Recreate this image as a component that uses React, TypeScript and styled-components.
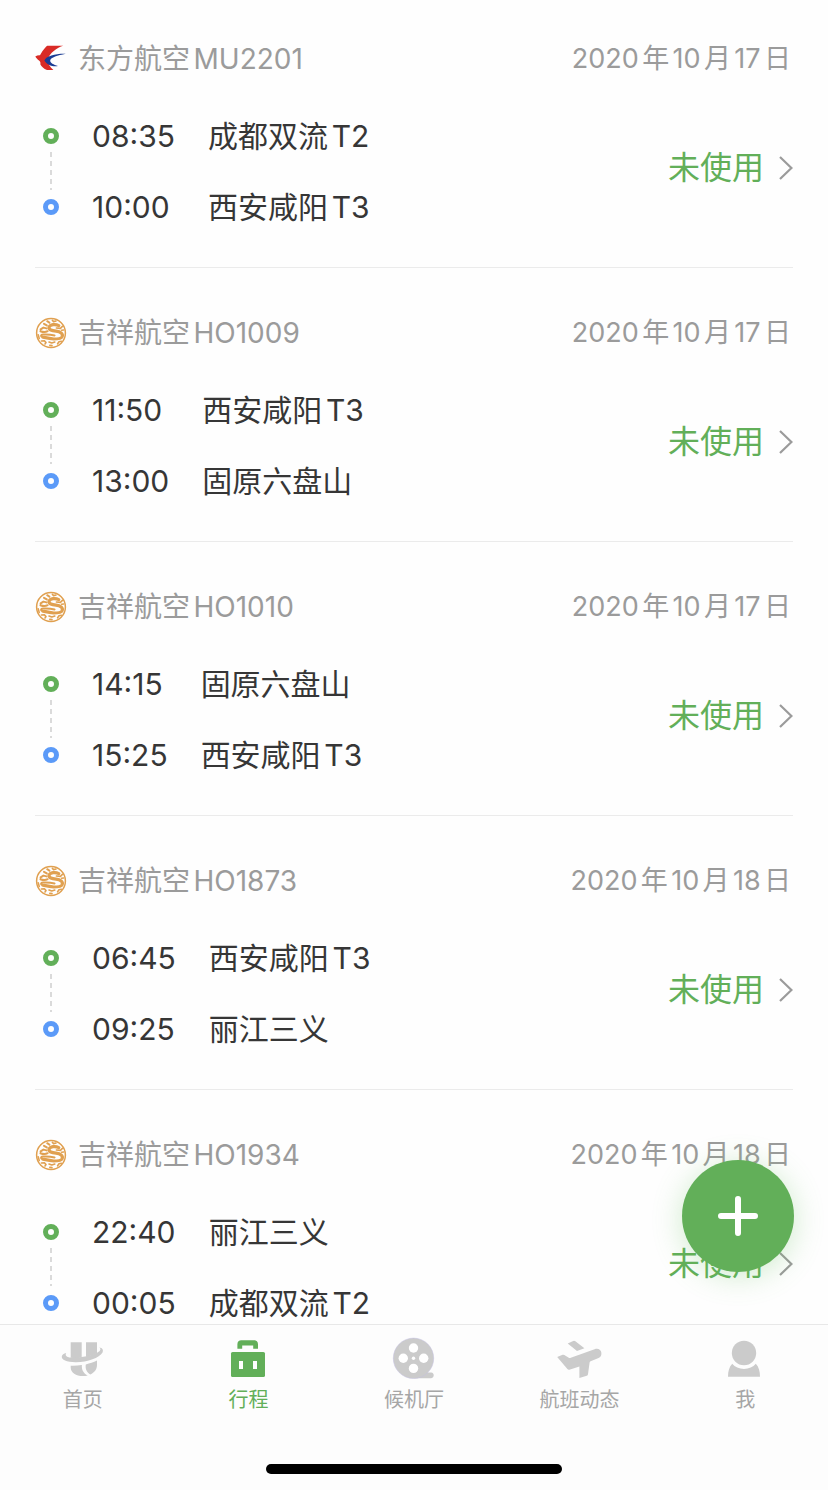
import React from 'react';
import styled, { createGlobalStyle } from 'styled-components';

const GlobalStyle = createGlobalStyle`
  * { box-sizing: border-box; }
  body {
    margin: 0;
    background: #fefefe;
    font-family: Inter, "Noto Sans CJK SC", sans-serif;
    color: #363636;
    text-autospace: normal;
  }
  button { font-family: inherit; }
`;

const GREEN = '#62af59';
const BLUE = '#5b9af8';

const Screen = styled.div`
  position: relative;
  display: flex;
  flex-direction: column;
  height: 100vh;
`;

const TripList = styled.main`
  flex: 1;
  min-height: 0;
  display: flex;
  flex-direction: column;
  gap: 6px;
  padding: 0 35px;
  overflow-y: auto;
  scrollbar-width: none;
`;

const Trip = styled.article`
  flex: none;
  padding: 39px 0 24px;
  border-bottom: 1px solid #ebebeb;
`;

const TripHeader = styled.header`
  display: flex;
  align-items: center;
  height: 40px;
  margin-bottom: 22px;
  padding-right: 2px;
  line-height: 40px;
  color: #9b9b9b;
`;

const FlightName = styled.h2`
  margin: 0 auto 0 11px;
  font-size: 28px;
  font-weight: 400;
`;

const FlightDate = styled.time`
  font-size: 27px;
`;

const TripBody = styled.div`
  display: flex;
  align-items: center;
`;

const Track = styled.div`
  display: flex;
  flex-direction: column;
  align-items: center;
  justify-content: space-between;
  width: 32px;
  height: 87px;
  margin: 0 25px 2px 0;
`;

const Stop = styled.span<{ $color: string }>`
  width: 16px;
  height: 16px;
  border: 5px solid ${(p) => p.$color};
  border-radius: 50%;
`;

const Dashes = styled.span`
  width: 2px;
  height: 38px;
  background: repeating-linear-gradient(#dadada 0 5px, transparent 5px 9px);
`;

const Legs = styled.div`
  display: grid;
  grid-template-columns: auto auto;
  column-gap: 33px;
  font-size: 30px;
  line-height: 71px;
`;

const Status = styled.a`
  display: flex;
  align-items: center;
  gap: 14px;
  margin: 0 0 8px auto;
  font-size: 32px;
  line-height: 40px;
  color: ${GREEN};
  text-decoration: none;
`;

const AddButton = styled.button`
  position: absolute;
  right: 34px;
  bottom: 218px;
  display: flex;
  align-items: center;
  justify-content: center;
  width: 112px;
  height: 112px;
  padding: 0;
  border: 0;
  border-radius: 50%;
  background: ${GREEN};
  box-shadow: 0 4px 30px rgba(98, 190, 90, 0.3);
`;

const TabBar = styled.nav`
  flex: none;
  display: flex;
  flex-direction: column;
  align-items: center;
  padding-bottom: 16px;
  border-top: 1px solid #e8e8e8;
  background: #fdfdfd;
`;

const Tabs = styled.div`
  display: flex;
  align-self: stretch;
  margin-bottom: 52px;
`;

const Tab = styled.button<{ $active?: boolean }>`
  flex: 1;
  display: flex;
  flex-direction: column;
  align-items: center;
  gap: 8px;
  padding: 13px 0 0;
  border: 0;
  background: none;
  font-size: 20px;
  line-height: 24px;
  color: ${(p) => (p.$active ? GREEN : '#a6a6a6')};

  svg { color: ${(p) => (p.$active ? GREEN : '#cbcbcb')}; overflow: visible; }
`;

const HomeIndicator = styled.div`
  width: 296px;
  height: 10px;
  border-radius: 5px;
  background: #000;
`;

const EasternLogo = () => (
  <svg width="32" height="32" viewBox="0 0 32 32" aria-hidden="true">
    <path fill="#d92b26" d="M12.3 2.7H28.3C22 4.5 14.5 10 12.6 16.5C12.8 20 15 24.5 18.4 27H12C8.8 25.5 6.4 23.5 5.4 21.4C5.6 19.5 5.2 18.6 4 17.6C2.6 16.2 1.4 15.2.3 13.4C1.8 12.4 3.5 12 5 12.2C6.5 9.5 9.5 4.6 12.3 2.7Z" />
    <path fill="#1b3c94" d="M30.8 10.8C21.5 10.4 11 13 9.4 17.4C11.8 22 17.5 23.8 23 23C18.5 21.8 15.2 20.2 15.2 17.6C15.8 14.2 22.5 12.6 30.8 10.8Z" />
  </svg>
);

const JuneyaoLogo = () => (
  <svg width="32" height="32" viewBox="0 0 32 32" fill="none" stroke="#e0a050" strokeLinecap="round" strokeLinejoin="round" aria-hidden="true">
    <circle cx="16" cy="16" r="14.4" strokeWidth="1.5" />
    <path strokeWidth="3.2" d="M23.8 8.6C20.4 6.8 15.2 7.4 14 10.2C13.6 12.8 16.8 13.8 21 14.2C25.6 14.8 28.2 16.6 27.2 19.6C26 22 22.6 22 18.8 22C14.6 21.6 11 20.8 8 20.2" />
    <path strokeWidth="2" d="M7.4 20C5.4 19.4 5.6 17.6 8 17.6C11.8 17.6 15 17.4 19.6 18.4M12.6 14.2C10.6 15.4 8.4 15.4 5.4 14.2M11.6 11.4L8.4 10.6L5.6 12.4M11.8 8.4L9 6.8M14.4 5.6L12.2 4.2" />
    <path strokeWidth="1.6" d="M17.4 3.4L18.6 4.6L21 4M27.4 9.4L25.4 11.4L21.4 11M28.6 13L26.6 13.2M3.2 17.8L4.2 21.4M6.4 24L9.4 23.8L11 25.6L10 27M14 25L16.8 26L19.8 25M17 28.6L14.8 28.4M22.6 26.8L24 24.8L26.4 24.2" />
  </svg>
);

const Chevron = () => (
  <svg width="15" height="26" viewBox="0 0 15 26" fill="none" stroke="#9b9b9b" strokeWidth="2.2" aria-hidden="true">
    <path d="M2 2L13.4 13L2 24" />
  </svg>
);

const PlusIcon = () => (
  <svg width="42" height="42" viewBox="0 0 42 42" stroke="#fff" strokeWidth="6" strokeLinecap="round" aria-hidden="true">
    <path d="M21 4V38M4 21H38" />
  </svg>
);

const HomeIcon = () => (
  <svg width="44" height="42" viewBox="0 0 44 42" fill="currentColor" aria-hidden="true">
    <path d="M9.7 4.3H20.7V19.6C17 20.2 13 20.3 9.7 19.8ZM25 4.3H36V15.2C32.6 17 29 18.2 25 19Z" />
    <path d="M5.2 15C3.8 17.6 5.6 19.2 9.7 19.6C19.5 20 30.5 17.8 36.5 14.6C39.8 12.8 40.2 11 38.2 9.6C41.4 9.8 42.8 12 41.4 14.8C38.4 20 26 24.4 14.5 24.2C5.5 24 .4 22.2.8 18.6C1 16.8 2.8 15.4 5.2 15Z" />
    <path d="M9.7 27.8C13.6 28 17.2 27.6 20.9 27C20.4 31.8 22.6 35.6 26.8 37.4C18 39.4 9.7 36 9.7 29.4Z" />
    <path d="M24.8 26.4C28.8 25.4 32.6 24.2 36 22.6V27C36 31.2 33.4 34.8 29.4 36.4C26 34.4 24 31 24.8 26.4Z" />
  </svg>
);

const SuitcaseIcon = () => (
  <svg width="44" height="42" viewBox="0 0 44 42" fill="currentColor" aria-hidden="true">
    <path d="M11.4 10.7V6.2C11.4 3.8 13 2.3 15.2 2.3H28.2C30.4 2.3 32 3.8 32 6.2V10.7H27.2V7.6H16.2V10.7Z" />
    <rect x="5" y="14" width="34" height="25" rx="1.6" />
    <path fill="#fff" d="M13 23H17V31H13ZM27 23H31V31H27Z" />
  </svg>
);

const ReelIcon = () => (
  <svg width="44" height="42" viewBox="0 0 44 42" fill="currentColor" aria-hidden="true">
    <path d="M21.5 40.2C27 40.2 31 37.8 33.6 34.6H39.2C42.6 34.6 42.6 40.2 39.2 40.2Z" />
    <circle cx="21.5" cy="20.3" r="20.2" stroke="#c3bfe0" strokeWidth=".5" />
    <g fill="#fff">
      <circle cx="21.5" cy="10" r="4.7" />
      <circle cx="11.3" cy="20.3" r="4.7" />
      <circle cx="31.7" cy="20.3" r="4.7" />
      <circle cx="21.5" cy="30.4" r="4.7" />
      <circle cx="21.5" cy="20.3" r="1.7" />
    </g>
  </svg>
);

const PlaneIcon = () => (
  <svg width="44" height="42" viewBox="0 0 44 42" fill="currentColor" aria-hidden="true">
    <path d="M9.7 5.4L15.2 3Q16.4 2.5 17.4 3.3L26.4 10.3L19 12.9Z" />
    <path d="M-.8 18.9L4.6 16.8Q5.5 16.5 6.3 17L10.8 19.7Q11.7 20.2 12.8 19.8L36.6 11.2C40.4 10 43.2 12 43.4 15C43.6 17.6 42.4 19.2 40.6 20L32.6 23.2Q31.7 23.6 31.6 24.6L30 36.2Q29.8 37.3 28.8 37.7L21.4 40.1V28.4L11.4 31.7Q10.2 32 9.4 31.1Z" />
  </svg>
);

const PersonIcon = () => (
  <svg width="44" height="42" viewBox="0 0 44 42" fill="currentColor" aria-hidden="true">
    <circle cx="21" cy="15" r="12.2" />
    <path d="M9.2 25.8C12 29 16 31 21 31C26 31 30 29 32.8 25.8C35.8 29 37 33.4 37 38.7H5C5 33.4 6.2 29 9.2 25.8Z" />
  </svg>
);

type Flight = {
  airline: string;
  code: string;
  date: string;
  depart: [string, string];
  arrive: [string, string];
};

const flights: Flight[] = [
  { airline: '东方航空', code: 'MU2201', date: '2020年10月17日', depart: ['08:35', '成都双流T2'], arrive: ['10:00', '西安咸阳T3'] },
  { airline: '吉祥航空', code: 'HO1009', date: '2020年10月17日', depart: ['11:50', '西安咸阳T3'], arrive: ['13:00', '固原六盘山'] },
  { airline: '吉祥航空', code: 'HO1010', date: '2020年10月17日', depart: ['14:15', '固原六盘山'], arrive: ['15:25', '西安咸阳T3'] },
  { airline: '吉祥航空', code: 'HO1873', date: '2020年10月18日', depart: ['06:45', '西安咸阳T3'], arrive: ['09:25', '丽江三义'] },
  { airline: '吉祥航空', code: 'HO1934', date: '2020年10月18日', depart: ['22:40', '丽江三义'], arrive: ['00:05', '成都双流T2'] },
];

const tabs = [
  { label: '首页', Icon: HomeIcon },
  { label: '行程', Icon: SuitcaseIcon, active: true },
  { label: '候机厅', Icon: ReelIcon },
  { label: '航班动态', Icon: PlaneIcon },
  { label: '我', Icon: PersonIcon },
];

export default function App() {
  return (
    <Screen>
      <GlobalStyle />
      <TripList>
        {flights.map((f) => (
          <Trip key={f.code}>
            <TripHeader>
              {f.airline === '东方航空' ? <EasternLogo /> : <JuneyaoLogo />}
              <FlightName>{f.airline + f.code}</FlightName>
              <FlightDate>{f.date}</FlightDate>
            </TripHeader>
            <TripBody>
              <Track>
                <Stop $color={GREEN} />
                <Dashes />
                <Stop $color={BLUE} />
              </Track>
              <Legs>
                <time>{f.depart[0]}</time>
                <span>{f.depart[1]}</span>
                <time>{f.arrive[0]}</time>
                <span>{f.arrive[1]}</span>
              </Legs>
              <Status href="#">
                未使用
                <Chevron />
              </Status>
            </TripBody>
          </Trip>
        ))}
      </TripList>
      <AddButton type="button" aria-label="添加行程">
        <PlusIcon />
      </AddButton>
      <TabBar>
        <Tabs>
          {tabs.map(({ label, Icon, active }) => (
            <Tab key={label} type="button" $active={active}>
              <Icon />
              {label}
            </Tab>
          ))}
        </Tabs>
        <HomeIndicator />
      </TabBar>
    </Screen>
  );
}
